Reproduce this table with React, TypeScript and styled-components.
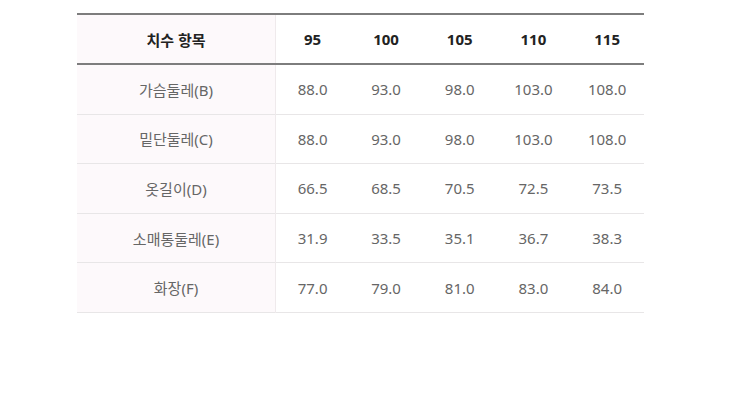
import styled, { createGlobalStyle } from "styled-components";

const GlobalStyle = createGlobalStyle`
  body {
    margin: 0;
    background: #fff;
    font-family: "Noto Sans", "Noto Sans CJK KR", sans-serif;
  }
`;

const sizes = ["95", "100", "105", "110", "115"];

const rows = [
  { label: "가슴둘레(B)", values: ["88.0", "93.0", "98.0", "103.0", "108.0"] },
  { label: "밑단둘레(C)", values: ["88.0", "93.0", "98.0", "103.0", "108.0"] },
  { label: "옷길이(D)", values: ["66.5", "68.5", "70.5", "72.5", "73.5"] },
  { label: "소매통둘레(E)", values: ["31.9", "33.5", "35.1", "36.7", "38.3"] },
  { label: "화장(F)", values: ["77.0", "79.0", "81.0", "83.0", "84.0"] },
];

const App = () => {
  return (
    <Page>
      <GlobalStyle />
      <SizeTable>
        <thead>
          <tr>
            <HeadCell $first>치수 항목</HeadCell>
            {sizes.map((s) => (
              <HeadCell key={s}>{s}</HeadCell>
            ))}
          </tr>
        </thead>
        <tbody>
          {rows.map((row) => (
            <Row key={row.label}>
              <Cell $first>{row.label}</Cell>
              {row.values.map((v, i) => (
                <Cell key={i}>{v}</Cell>
              ))}
            </Row>
          ))}
        </tbody>
      </SizeTable>
    </Page>
  );
};

export default App;

const Page = styled.main`
  width: 750px;
  height: 404px;
  padding: 13px 0 0 77px;
  box-sizing: border-box;
`;

const SizeTable = styled.table`
  width: 567px;
  border-collapse: collapse;
  table-layout: fixed;
  border-top: 2px solid #7d7d7d;
`;

const HeadCell = styled.th<{ $first?: boolean }>`
  height: 48px;
  padding: 0;
  width: ${(p) => (p.$first ? "198px" : "auto")};
  text-align: center;
  font-size: 15px;
  font-weight: 700;
  color: #222;
  background: ${(p) => (p.$first ? "#fdf9fb" : "#fff")};
  border-right: ${(p) => (p.$first ? "1px solid #efeaec" : "none")};
  border-bottom: 2px solid #7d7d7d;
`;

const Row = styled.tr`
  border-bottom: 1px solid #e8e6e7;
`;

const Cell = styled.td<{ $first?: boolean }>`
  height: 48.6px;
  padding: 0;
  text-align: center;
  font-size: 15px;
  color: #666;
  background: ${(p) => (p.$first ? "#fdf9fb" : "#fff")};
  border-right: ${(p) => (p.$first ? "1px solid #efeaec" : "none")};
`;
